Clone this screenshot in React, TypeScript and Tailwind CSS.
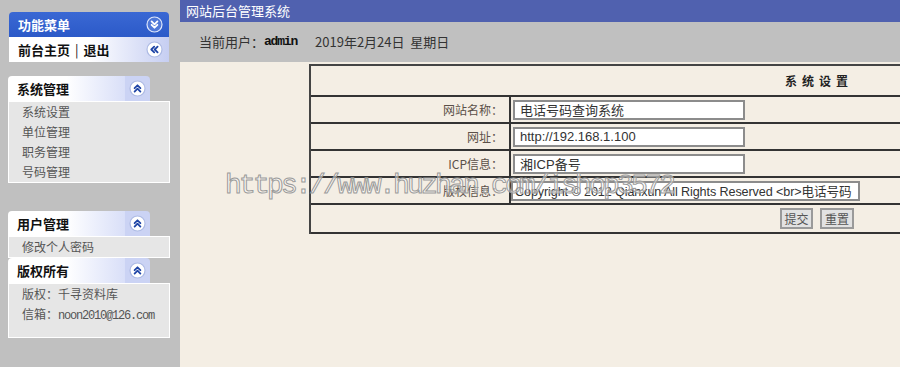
import React from 'react';

const cjk = "font-['Noto_Sans_CJK_SC',sans-serif]";

type Dir = 'up' | 'down' | 'left';

// round toggle button with double chevrons
const Toggle: React.FC<{ dir: Dir; dark?: boolean }> = ({ dir, dark }) => {
  const rot = dir === 'up' ? 0 : dir === 'down' ? 180 : -90;
  return (
    <svg width="17" height="17" viewBox="0 0 17 17" className="shrink-0">
      <circle
        cx="8.5"
        cy="8.5"
        r="7.5"
        fill={dark ? '#4f78d8' : '#ffffff'}
        stroke={dark ? '#dfe7fb' : '#aebbe4'}
        strokeWidth="1.2"
      />
      <g
        transform={`rotate(${rot} 8.5 8.5)`}
        stroke={dark ? '#ffffff' : '#1f45a6'}
        strokeWidth="1.8"
        fill="none"
        strokeLinecap="round"
        strokeLinejoin="round"
      >
        <path d="M5.6 8.2 L8.5 5.3 L11.4 8.2" />
        <path d="M5.6 11.6 L8.5 8.7 L11.4 11.6" />
      </g>
    </svg>
  );
};

const MenuSection: React.FC<{ title: string; children: React.ReactNode; className?: string }> = ({
  title,
  children,
  className = '',
}) => (
  <div className={`w-[162px] ${className}`}>
    <div className="flex h-[25px] w-[142px] overflow-hidden rounded-t-[4px]">
      <div className="flex flex-1 items-center bg-gradient-to-r from-white via-white to-[#d9dff8] pl-[9px]">
        <span className="text-[13px] font-bold text-[#111]">{title}</span>
      </div>
      <div className="flex w-[25px] items-center justify-center bg-[#cbd3f4]">
        <Toggle dir="up" />
      </div>
    </div>
    <div className="border border-white bg-[#e6e6e6]">{children}</div>
  </div>
);

const Item: React.FC<{ children: React.ReactNode }> = ({ children }) => (
  <div className="h-[20px] pl-[13px] text-[12px] leading-[20px] text-[#555]">{children}</div>
);

const Field: React.FC<{ label: string; value: string; wide?: boolean }> = ({ label, value, wide }) => (
  <div className="flex h-[27px] border-b-2 border-[#333]">
    <div className="flex w-[200px] items-center justify-end border-r-2 border-[#333] pr-[6px] text-[12px] text-[#5b5048]">
      {label}
    </div>
    <div className={`flex items-center ${wide ? 'pl-0' : 'pl-[2px]'}`}>
      <input
        readOnly
        value={value}
        className={`h-[20px] ${wide ? 'w-[349px] px-[2px] text-[12.6px] tracking-[-0.1px]' : 'w-[232px] px-[5px] text-[13px]'} border-2 border-[#8c8c8c] bg-white font-['Liberation_Sans','Noto_Sans_CJK_SC',sans-serif] text-[#333] outline-none`}
      />
    </div>
  </div>
);

export default function App() {
  return (
    <div className={`relative flex h-[367px] w-[900px] overflow-hidden ${cjk}`}>
      {/* Sidebar */}
      <aside className="flex w-[180px] shrink-0 flex-col bg-[#c0c0c0] pl-[8px] pt-[12px]">
        <div className="ml-[1px] w-[160px]">
          <div className="flex h-[25px] items-center justify-between rounded-t-[4px] bg-gradient-to-b from-[#3a68d4] to-[#2c5ac8] pl-[9px] pr-[6px]">
            <span className="text-[13px] font-bold text-white">功能菜单</span>
            <Toggle dir="down" dark />
          </div>
          <div className="flex h-[25px] items-center justify-between bg-gradient-to-r from-white via-white to-[#c6cef2] pl-[9px] pr-[6px]">
            <span className="text-[13px] font-bold text-[#111]">
              前台主页<span className="mx-[5px] font-normal">|</span>退出
            </span>
            <Toggle dir="left" />
          </div>
        </div>

        <MenuSection title="系统管理" className="mt-[14px]">
          <Item>系统设置</Item>
          <Item>单位管理</Item>
          <Item>职务管理</Item>
          <Item>号码管理</Item>
        </MenuSection>

        <MenuSection title="用户管理" className="mt-[28px]">
          <Item>修改个人密码</Item>
        </MenuSection>

        <MenuSection title="版权所有">
          <div className="pb-[13px]">
            <Item>版权：千寻资料库</Item>
            <Item>
              信箱：
              <span className="font-['Liberation_Mono',monospace] text-[12px] tracking-[-1.2px]">
                noon2010@126.com
              </span>
            </Item>
          </div>
        </MenuSection>
      </aside>

      {/* Main */}
      <main className="flex min-w-0 flex-1 flex-col">
        <div className="flex h-[22px] items-center bg-[#5061af] pl-[6px] text-[13px] text-white">
          网站后台管理系统
        </div>
        <div className="flex h-[40px] items-center bg-[#c0c0c0] pl-[19px] text-[13px] text-[#333]">
          当前用户：
          <span className="font-['Liberation_Mono',monospace] font-bold tracking-[-1.2px] text-[#111]">admin</span>
          <span className="ml-[18px]">2019年2月24日&nbsp; 星期日</span>
        </div>

        <div className="flex-1 overflow-hidden bg-[#f4eee4] pl-[129px] pt-[2px]">
          <div className="w-[1020px] border-l-2 border-t-2 border-[#444]">
            <div className="flex h-[31px] items-center border-b-2 border-[#333] pl-[474px]">
              <span className="text-[12px] font-bold tracking-[5px] text-[#222]">系统设置</span>
            </div>
            <Field label="网站名称：" value="电话号码查询系统" />
            <Field label="网址：" value="http://192.168.1.100" />
            <Field label="ICP信息：" value="湘ICP备号" />
            <Field label="版权信息：" value="Copyright © 2012 Qianxun All Rights Reserved <br>电话号码" wide />
            <div className="flex h-[29px] items-center border-b-2 border-[#333] pl-[469px]">
              <div className="flex gap-[7px]">
                <button className="h-[21px] w-[33px] border-2 border-[#9a9a9a] bg-[#e2e2e2] text-[12px] leading-none text-[#555]">
                  提交
                </button>
                <button className="h-[21px] w-[34px] border-2 border-[#9a9a9a] bg-[#e2e2e2] text-[12px] leading-none text-[#555]">
                  重置
                </button>
              </div>
            </div>
          </div>
        </div>
      </main>

      {/* watermark */}
      <div className="pointer-events-none absolute left-[225px] top-[172px] whitespace-nowrap font-['Liberation_Mono',monospace] text-[28px] leading-none tracking-[-2.8px] text-white/50 [-webkit-text-stroke:1px_#9a9a9a]">
        https://www.huzhan.com/ishop3572
      </div>
    </div>
  );
}
